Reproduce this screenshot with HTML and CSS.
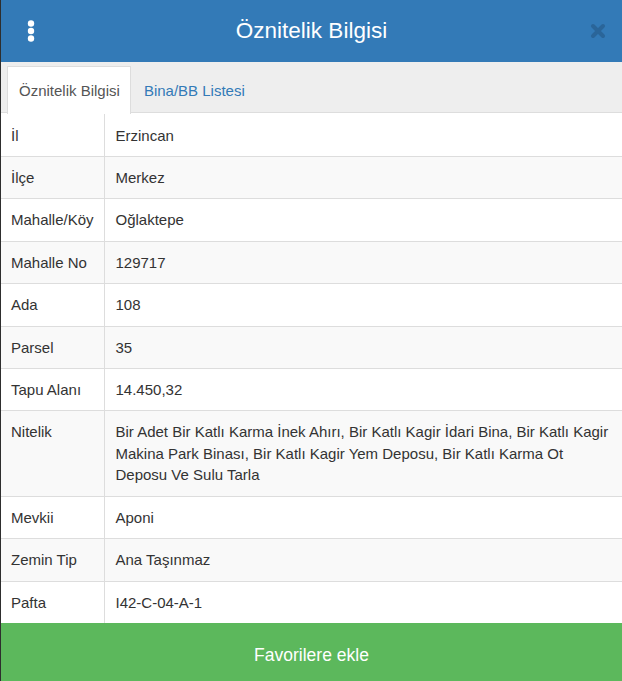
FILE: index.html
```html
<!DOCTYPE html>
<html lang="tr">
<head>
  <meta charset="UTF-8">
  <meta name="viewport" content="width=device-width,initial-scale=1">
  <title>Öznitelik Bilgisi</title>
  <link rel="stylesheet" href="styles.css">
</head>
<body>
  <div class="panel">
    <div class="panelheader">
      <span class="menubutton">
        <svg width="8" height="22" viewBox="0 0 8 22">
          <circle cx="4" cy="3.5" r="3.2" fill="#fff"/>
          <circle cx="4" cy="11" r="3.2" fill="#fff"/>
          <circle cx="4" cy="18.5" r="3.2" fill="#fff"/>
        </svg>
      </span>
      <h1 class="paneltitle">Öznitelik Bilgisi</h1>
      <span class="closebutton">
        <svg width="16" height="16" viewBox="0 0 16 16">
          <path d="M3 3 L13 13 M13 3 L3 13" stroke="#2a6599" stroke-width="4" stroke-linecap="round"/>
        </svg>
      </span>
    </div>

    <ul class="tabs">
      <li class="tab active">Öznitelik Bilgisi</li>
      <li class="tab">Bina/BB Listesi</li>
    </ul>

    <div class="tablewrap">
      <table class="attrtable">
        <colgroup>
          <col class="labelcol">
          <col>
        </colgroup>
        <tr><td>İl</td><td>Erzincan</td></tr>
        <tr><td>İlçe</td><td>Merkez</td></tr>
        <tr><td>Mahalle/Köy</td><td>Oğlaktepe</td></tr>
        <tr><td>Mahalle No</td><td>129717</td></tr>
        <tr><td>Ada</td><td>108</td></tr>
        <tr><td>Parsel</td><td>35</td></tr>
        <tr><td>Tapu Alanı</td><td>14.450,32</td></tr>
        <tr><td>Nitelik</td><td>Bir Adet Bir Katlı Karma İnek Ahırı, Bir Katlı Kagir İdari Bina, Bir Katlı Kagir Makina Park Binası, Bir Katlı Kagir Yem Deposu, Bir Katlı Karma Ot Deposu Ve Sulu Tarla</td></tr>
        <tr><td>Mevkii</td><td>Aponi</td></tr>
        <tr><td>Zemin Tip</td><td>Ana Taşınmaz</td></tr>
        <tr><td>Pafta</td><td>I42-C-04-A-1</td></tr>
      </table>
    </div>

    <button class="favbutton">Favorilere ekle</button>
  </div>
</body>
</html>
```

FILE: styles.css
```css
html, body {
  margin: 0;
  padding: 0;
  height: 100%;
}

body {
  background-color: #2e2e2e;
  font-family: "Liberation Sans", Arial, sans-serif;
  font-size: 15px;
  color: #333333;
}

.panel {
  margin-left: 1px;
  height: 681px;
  background-color: #ffffff;
  display: flex;
  flex-direction: column;
  overflow: hidden;
}

/*header*/

.panelheader {
  height: 62px;
  flex-shrink: 0;
  background-color: #337ab7;
  display: grid;
  grid-template-columns: 1fr auto 1fr;
  align-items: center;
}

.menubutton {
  display: flex;
  justify-self: start;
  margin-left: 26px;
  margin-top: -1px;
}

.closebutton {
  display: flex;
  justify-self: end;
  margin-right: 16px;
}

.paneltitle {
  margin: 0;
  font-size: 22.5px;
  font-weight: normal;
  color: #ffffff;
}

/*tabs*/

.tabs {
  list-style: none;
  margin: 0;
  padding: 4px 0 0 6px;
  height: 46px;
  flex-shrink: 0;
  background-color: #eeeeee;
  border-bottom: 1px solid #dddddd;
  display: flex;
}

.tab {
  padding: 0 10px 0 12px;
  line-height: 47px;
  font-size: 15px;
  color: #337ab7;
  border: 1px solid transparent;
  border-bottom: none;
}

.tab.active {
  color: #555555;
  background-color: #ffffff;
  border-color: #dddddd;
  height: 47px;
  padding: 0 10px 0 11px;
}

/*table*/

.tablewrap {
  flex: 1;
  overflow: hidden;
  padding-top: 1px;
}

.attrtable {
  width: 100%;
  border-collapse: collapse;
  table-layout: fixed;
}

.labelcol {
  width: 103px;
}

.attrtable td {
  padding: 10px 10px;
  line-height: 1.42857;
  vertical-align: top;
  border-top: 1px solid #dddddd;
}

.attrtable tr:first-child td {
  border-top: none;
  padding-top: 10.5px;
}

.attrtable td:first-child {
  border-right: 1px solid #dddddd;
  padding-right: 4px;
}

.attrtable td + td {
  padding-left: 11px;
}

.attrtable tr:nth-child(even) td {
  background-color: #f9f9f9;
}

/*button*/

.favbutton {
  height: 58px;
  flex-shrink: 0;
  border: none;
  background-color: #5cb85c;
  color: #ffffff;
  font-family: "Liberation Sans", Arial, sans-serif;
  font-size: 17.5px;
  padding: 6px 0 0;
}
```
